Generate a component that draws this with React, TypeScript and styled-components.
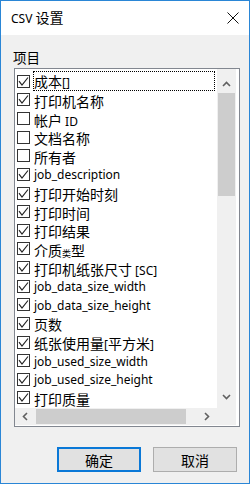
import React from 'react';
import styled, { createGlobalStyle } from 'styled-components';

const Global = createGlobalStyle`
  html, body { margin: 0; padding: 0; background: #ffffff; }
  body { font-family: "Noto Sans", "Noto Sans CJK SC", sans-serif; }
  * { box-sizing: border-box; }
`;

const Window = styled.div`
  width: 250px;
  height: 484px;
  border: 1px solid #2a86d6;
  display: flex;
  flex-direction: column;
  background: #f0f0f0;
`;

const TitleBar = styled.div`
  height: 34px;
  flex: none;
  background: #ffffff;
  display: flex;
  align-items: center;
  justify-content: space-between;
  padding: 0 10px 0 10px;
  color: #000;
`;

const Title = styled.div`
  font-size: 12.5px;
  line-height: 18px;
  white-space: pre;
`;

const Body = styled.div`
  flex: 1;
  display: flex;
  flex-direction: column;
  padding: 13px 0 11px 0;
`;

const GroupLabel = styled.div`
  height: 18px;
  line-height: 18px;
  margin-left: 12px;
  margin-bottom: 2px;
  font-family: "Noto Sans CJK SC", sans-serif;
  font-size: 13.5px;
  color: #000;
`;

const ListBox = styled.div`
  margin-left: 13px;
  width: 226px;
  height: 359px;
  border: 1px solid #828790;
  background: #ffffff;
  padding: 0 3px 1px 0;
  display: grid;
  grid-template-columns: 1fr 19px;
  grid-template-rows: 1fr 17px;
`;

const Content = styled.div`
  overflow: hidden;
  padding-top: 3px;
  display: flex;
  flex-direction: column;
`;

const Row = styled.div`
  height: 18.63px;
  flex: none;
  display: flex;
  align-items: center;
  padding-left: 2px;
`;

const Box = styled.div`
  width: 13px;
  height: 13px;
  flex: none;
  border: 1px solid #333333;
  background: #ffffff;
  display: flex;
`;

const LabelWrap = styled.div<{ $focus?: boolean }>`
  flex: 1;
  margin-left: 3px;
  margin-right: 2px;
  height: ${p => (p.$focus ? '20px' : '18px')};
  line-height: ${p => (p.$focus ? '18px' : '18px')};
  border: 1px dotted ${p => (p.$focus ? '#000' : 'transparent')};
  white-space: pre;
  overflow: visible;
  color: #000;
  font-size: 12px;
`;

const Latin = styled.span`
  font-family: "Noto Sans", sans-serif;
  font-size: 12px;
`;

const Cjk = styled.span<{ $tiny?: boolean }>`
  font-family: "Noto Sans CJK SC", sans-serif;
  font-size: ${p => (p.$tiny ? '9px' : '14px')};
  ${p => (p.$tiny ? 'position: relative; top: 1px;' : '')}
`;

const VScroll = styled.div`
  background: #f0f0f0;
  display: flex;
  flex-direction: column;
`;

const VButton = styled.div<{ $up?: boolean }>`
  height: 24px;
  flex: none;
  display: flex;
  align-items: center;
  justify-content: center;
  padding-top: ${p => (p.$up ? '6px' : '0')};
`;

const VTrack = styled.div`
  flex: 1;
  padding: 0 1px;
`;

const VThumb = styled.div`
  height: 103px;
  background: #cdcdcd;
`;

const HScroll = styled.div`
  background: #f0f0f0;
  display: flex;
  align-items: stretch;
`;

const HButton = styled.div`
  width: 21px;
  flex: none;
  display: flex;
  align-items: center;
  justify-content: center;
`;

const HTrack = styled.div`
  flex: 1;
  padding: 1px 0;
  display: flex;
`;

const HThumb = styled.div`
  width: 150px;
  background: #cdcdcd;
`;

const Corner = styled.div`
  background: #f0f0f0;
`;

const Buttons = styled.div`
  margin-top: auto;
  display: flex;
  justify-content: flex-end;
  gap: 12px;
  padding-right: 12px;
`;

const Button = styled.button<{ $default?: boolean }>`
  width: 84px;
  height: 25px;
  padding: 0;
  background: #e1e1e1;
  border: ${p => (p.$default ? '2px solid #0a78d7' : '1px solid #adadad')};
  font-family: "Noto Sans CJK SC", sans-serif;
  font-size: 14px;
  color: #000;
  display: flex;
  align-items: center;
  justify-content: center;
`;

const CJK_RE = /[\u2e80-\u9fff\uf900-\ufaff\u3000-\u303f\uff00-\uffef]/;

function Text({ text, tiny }: { text: string; tiny?: string }) {
  const runs: { s: string; cjk: boolean; tiny: boolean }[] = [];
  for (const ch of text) {
    const c = CJK_RE.test(ch);
    const t = ch === tiny;
    const last = runs[runs.length - 1];
    if (last && last.cjk === c && last.tiny === t && !t) last.s += ch;
    else runs.push({ s: ch, cjk: c, tiny: t });
  }
  return (
    <>
      {runs.map((r, i) =>
        r.cjk ? (
          <Cjk key={i} $tiny={r.tiny}>
            {r.s}
          </Cjk>
        ) : (
          <Latin key={i}>{r.s}</Latin>
        )
      )}
    </>
  );
}

const Check = () => (
  <svg width="11" height="11" viewBox="0 0 11 11">
    <path d="M1 5.2 L4 9 L10 1.5" fill="none" stroke="#222" strokeWidth="1.2" />
  </svg>
);

const Chevron = ({ dir }: { dir: 'up' | 'down' | 'left' | 'right' }) => {
  const d = {
    up: 'M1 6 L4.5 2.5 L8 6',
    down: 'M1 3 L4.5 6.5 L8 3',
    left: 'M6 1 L2.5 4.5 L6 8',
    right: 'M3 1 L6.5 4.5 L3 8',
  }[dir];
  return (
    <svg width="9" height="9" viewBox="0 0 9 9">
      <path d={d} fill="none" stroke="#606060" strokeWidth="1.6" />
    </svg>
  );
};

const items: { t: string; c: boolean; focus?: boolean; tiny?: string }[] = [
  { t: '成本[]', c: true, focus: true },
  { t: '打印机名称', c: true },
  { t: '帐户 ID', c: false },
  { t: '文档名称', c: false },
  { t: '所有者', c: false },
  { t: 'job_description', c: true },
  { t: '打印开始时刻', c: true },
  { t: '打印时间', c: true },
  { t: '打印结果', c: true },
  { t: '介质类型', c: true, tiny: '类' },
  { t: '打印机纸张尺寸 [SC]', c: true },
  { t: 'job_data_size_width', c: true },
  { t: 'job_data_size_height', c: true },
  { t: '页数', c: true },
  { t: '纸张使用量[平方米]', c: true },
  { t: 'job_used_size_width', c: true },
  { t: 'job_used_size_height', c: true },
  { t: '打印质量', c: true },
];

export default function App() {
  return (
    <>
      <Global />
      <Window>
        <TitleBar>
          <Title>
            <Text text="CSV 设置" />
          </Title>
          <svg width="12" height="12" viewBox="0 0 12 12">
            <path d="M0.5 0.5 L11.5 11.5 M11.5 0.5 L0.5 11.5" stroke="#111" strokeWidth="1" />
          </svg>
        </TitleBar>
        <Body>
          <GroupLabel>项目</GroupLabel>
          <ListBox>
            <Content>
              {items.map((it, i) => (
                <Row key={i}>
                  <Box>{it.c && <Check />}</Box>
                  <LabelWrap $focus={it.focus}>
                    <Text text={it.t} tiny={it.tiny} />
                  </LabelWrap>
                </Row>
              ))}
            </Content>
            <VScroll>
              <VButton $up>
                <Chevron dir="up" />
              </VButton>
              <VTrack>
                <VThumb />
              </VTrack>
              <VButton>
                <Chevron dir="down" />
              </VButton>
            </VScroll>
            <HScroll>
              <HButton>
                <Chevron dir="left" />
              </HButton>
              <HTrack>
                <HThumb />
              </HTrack>
              <HButton>
                <Chevron dir="right" />
              </HButton>
            </HScroll>
            <Corner />
          </ListBox>
          <Buttons>
            <Button $default>确定</Button>
            <Button>取消</Button>
          </Buttons>
        </Body>
      </Window>
    </>
  );
}
